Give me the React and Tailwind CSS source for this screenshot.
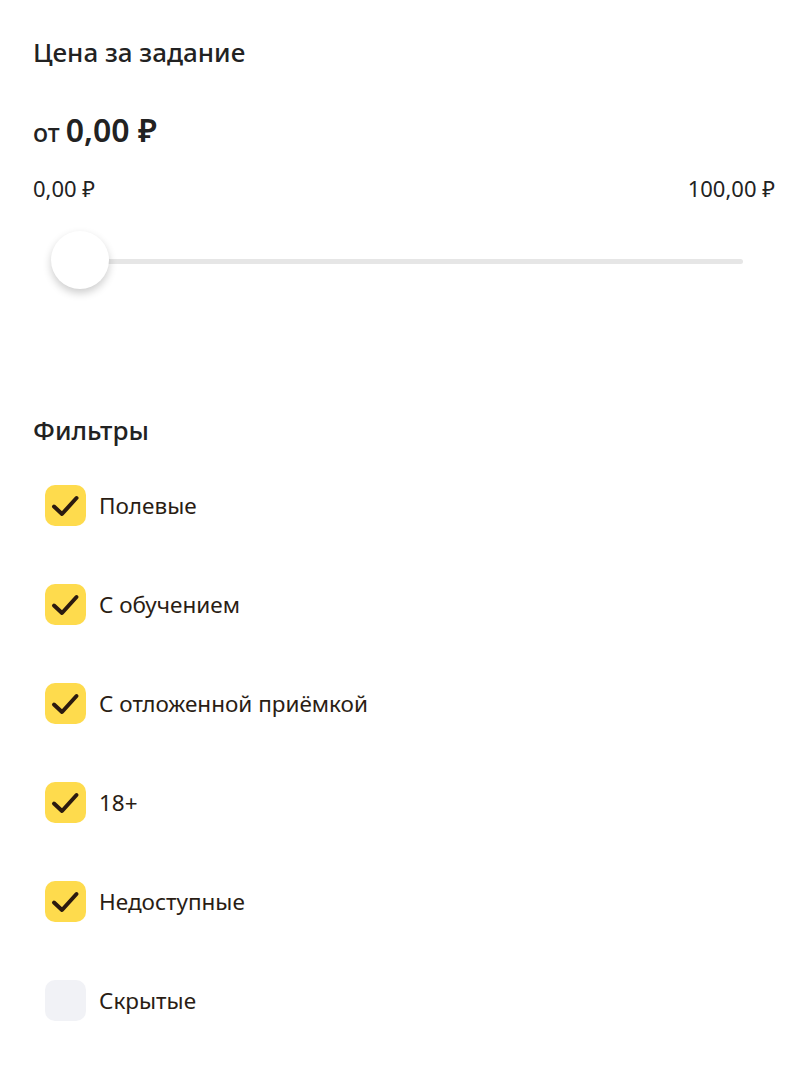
import { useState } from "react";

const filters = [
  { id: "field", label: "Полевые", checked: true },
  { id: "training", label: "С обучением", checked: true },
  { id: "delayed", label: "С отложенной приёмкой", checked: true },
  { id: "adult", label: "18+", checked: true },
  { id: "unavailable", label: "Недоступные", checked: true },
  { id: "hidden", label: "Скрытые", checked: false },
];

function Checkbox({ checked, label, onToggle }) {
  return (
    <button onClick={onToggle} className="flex items-center h-[99px] text-left">
      <span
        className={`w-[41px] h-[41px] rounded-[10px] flex items-center justify-center ${
          checked ? "bg-[#fedb4d]" : "bg-[#f1f2f6]"
        }`}
      >
        {checked && (
          <svg width="41" height="41" viewBox="0 0 41 41" fill="none">
            <path
              d="M9 21.5L17 29L31.5 13"
              stroke="#2b1a0f"
              strokeWidth="4"
              strokeLinecap="round"
              strokeLinejoin="round"
            />
          </svg>
        )}
      </span>
      <span className="ml-[13px] text-[22.5px] text-[#2a1d14]">{label}</span>
    </button>
  );
}

export default function App() {
  const [items, setItems] = useState(filters);

  function toggle(id) {
    setItems((list) => list.map((f) => (f.id === id ? { ...f, checked: !f.checked } : f)));
  }

  return (
    <div className="w-[808px] h-[1080px] bg-white font-['Noto_Sans',sans-serif] text-[#222222] px-[33px] overflow-hidden">
      <h2 className="pt-[34px] text-[26px] leading-[36px] font-medium">Цена за задание</h2>

      <div className="mt-[40px] flex items-baseline leading-[40px]">
        <span className="text-[25px] font-medium">от</span>
        <span className="ml-[6px] text-[32px] font-semibold">0,00 ₽</span>
      </div>

      <div className="mt-[22px] flex justify-between text-[22px] leading-[28px]">
        <span>0,00 ₽</span>
        <span>100,00 ₽</span>
      </div>

      <div className="relative mt-[29px] ml-[47px] mr-[32px] h-[60px] flex items-center">
        <div className="w-full h-[5px] bg-[#e6e6e6] rounded-full" />
        <div className="absolute left-[-29px] top-[0px] w-[58px] h-[58px] rounded-full bg-white shadow-[0_4px_8px_rgba(0,0,0,0.2)]" />
      </div>

      <h2 className="mt-[121px] text-[26px] leading-[36px] font-medium">Фильтры</h2>

      <div className="mt-[8px] ml-[12px] flex flex-col">
        {items.map((f) => (
          <Checkbox key={f.id} checked={f.checked} label={f.label} onToggle={() => toggle(f.id)} />
        ))}
      </div>
    </div>
  );
}
